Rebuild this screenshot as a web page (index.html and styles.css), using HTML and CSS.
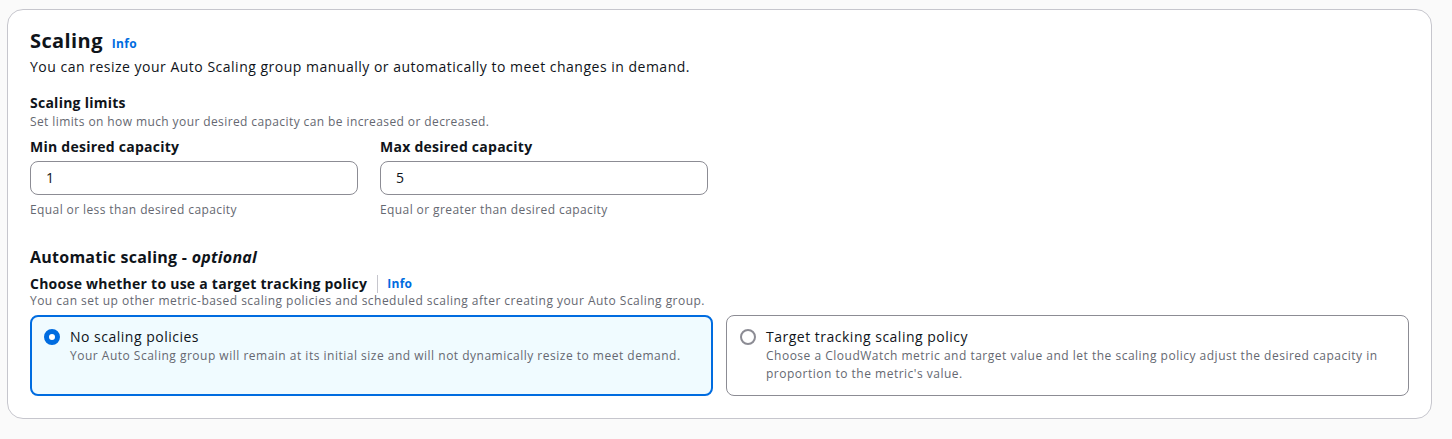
FILE: index.html
```html
<!DOCTYPE html>
<html>
<head>
<meta charset="utf-8">
<link rel="stylesheet" href="styles.css">
</head>
<body>
<div class="page">
  <section class="card">
    <div class="header">
      <h2 class="title">Scaling</h2>
      <a class="info">Info</a>
    </div>
    <p class="desc">You can resize your Auto Scaling group manually or automatically to meet changes in demand.</p>

    <div class="group">
      <div class="label">Scaling limits</div>
      <div class="hint">Set limits on how much your desired capacity can be increased or decreased.</div>
      <div class="fields">
        <div class="field">
          <div class="label">Min desired capacity</div>
          <div class="input">1</div>
          <div class="hint below">Equal or less than desired capacity</div>
        </div>
        <div class="field">
          <div class="label">Max desired capacity</div>
          <div class="input">5</div>
          <div class="hint below">Equal or greater than desired capacity</div>
        </div>
      </div>
    </div>

    <h3 class="subtitle">Automatic scaling - <i>optional</i></h3>
    <div class="label-row">
      <span class="label">Choose whether to use a target tracking policy</span>
      <span class="sep"></span>
      <a class="info">Info</a>
    </div>
    <div class="hint tight">You can set up other metric-based scaling policies and scheduled scaling after creating your Auto Scaling group.</div>

    <div class="tiles">
      <div class="tile selected">
        <span class="radio on"></span>
        <div class="tile-text">
          <div class="tile-title">No scaling policies</div>
          <div class="tile-desc">Your Auto Scaling group will remain at its initial size and will not dynamically resize to meet demand.</div>
        </div>
      </div>
      <div class="tile">
        <span class="radio"></span>
        <div class="tile-text">
          <div class="tile-title">Target tracking scaling policy</div>
          <div class="tile-desc">Choose a CloudWatch metric and target value and let the scaling policy adjust the desired capacity in proportion to the metric's value.</div>
        </div>
      </div>
    </div>
  </section>
</div>
</body>
</html>
```

FILE: styles.css
```css
* { box-sizing: border-box; }
html, body { margin: 0; padding: 0; background: #fafafa; }
body {
  font-family: "Open Sans", "Noto Sans", sans-serif;
  color: #0f141a;
  font-size: 14px;
  line-height: 20px;
  letter-spacing: 0.5px;
}
.page {
  padding: 9px 20px 20px 7px;
}
.card {
  background: #ffffff;
  border: 1px solid #c6c6cd;
  border-radius: 16px;
  padding: 17px 22px 22px 22px;
}
.header {
  display: flex;
  align-items: baseline;
  gap: 9px;
}
.title {
  margin: 0;
  font-size: 20px;
  line-height: 28px;
  font-weight: 700;
  letter-spacing: 0.4px;
}
.info {
  color: #006ce0;
  font-size: 12px;
  font-weight: 700;
  line-height: 16px;
  letter-spacing: 0.3px;
}
.desc {
  margin: 2px 0 0 0;
  font-size: 14px;
  line-height: 20px;
  color: #0f141a;
}
.group { margin-top: 16px; }
.label {
  font-weight: 700;
  font-size: 14px;
  line-height: 20px;
  letter-spacing: 0.25px;
}
.hint {
  font-size: 12px;
  line-height: 16px;
  color: #656871;
  letter-spacing: 0.4px;
}
.group > .hint { margin-top: 1px; }
.fields {
  display: grid;
  grid-template-columns: 328px 328px;
  column-gap: 22px;
  margin-top: 7px;
}
.input {
  margin-top: 4px;
  height: 34px;
  border: 1px solid #8c8c94;
  border-radius: 8px;
  padding: 6px 15px;
  font-size: 14px;
  line-height: 20px;
}
.hint.below { margin-top: 7px; }
.subtitle {
  margin: 28px 0 0 0;
  font-size: 16px;
  line-height: 22px;
  font-weight: 700;
  letter-spacing: 0.25px;
}
.subtitle i { font-weight: 700; }
.label-row {
  display: flex;
  align-items: center;
  margin-top: 6px;
}
.sep {
  width: 1px;
  height: 18px;
  background: #c6c6cd;
  margin: 0 9px 0 10px;
}
.label-row .info { font-size: 12px; }
.hint.tight { margin-top: -1px; letter-spacing: 0.47px; }
.tiles {
  display: grid;
  grid-template-columns: 1fr 1fr;
  column-gap: 13px;
  margin-top: 6px;
}
.tile {
  display: flex;
  gap: 10px;
  align-items: flex-start;
  border: 1px solid #8c8c94;
  border-radius: 8px;
  padding: 11px 15px 12px 13px;
}
.tile.selected {
  border: 2px solid #006ce0;
  background: #f0fbff;
  padding: 10px 14px 11px 12px;
}
.radio {
  flex: none;
  width: 16px;
  height: 16px;
  border-radius: 50%;
  border: 2px solid #8c8c94;
  background: #fff;
  margin-top: 2px;
}
.radio.on {
  border: 5px solid #006ce0;
}
.tile-title {
  font-size: 14px;
  line-height: 20px;
  color: #0f141a;
}
.tile-desc {
  font-size: 12px;
  line-height: 18px;
  color: #656871;
  letter-spacing: 0.5px;
}
```
